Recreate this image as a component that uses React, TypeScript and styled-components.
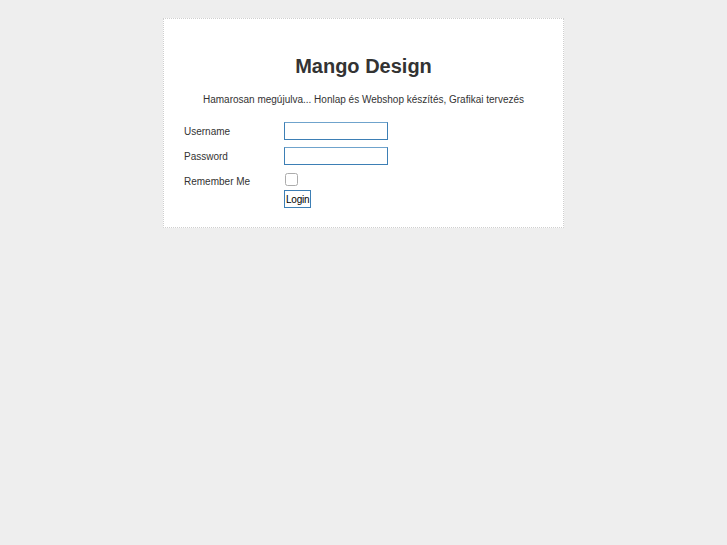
import styled, { createGlobalStyle } from 'styled-components';

const GlobalStyle = createGlobalStyle`
  html, body {
    margin: 0;
    padding: 0;
    background: #eeeeee;
    font-family: "Liberation Sans", Arial, sans-serif;
    color: #333333;
  }
`;

const App = () => (
  <>
    <GlobalStyle />
    <Page>
      <Card>
        <Title>Mango Design</Title>
        <Subtitle>Hamarosan megújulva... Honlap és Webshop készítés, Grafikai tervezés</Subtitle>
        <Form>
          <Label>Username</Label>
          <TextInput type="text" />
          <Label>Password</Label>
          <TextInput type="password" />
          <Label $top>Remember Me</Label>
          <Controls>
            <Check type="checkbox" />
            <LoginButton type="button">Login</LoginButton>
          </Controls>
        </Form>
      </Card>
    </Page>
  </>
);

const Page = styled.div`
  padding-top: 18px;
  height: 527px;
`;

const Card = styled.div`
  width: 399px;
  margin: 0 auto;
  background: #ffffff;
  border: 1px dotted #cfcfcf;
  padding: 35px 0 19px;
  box-sizing: content-box;
`;

const Title = styled.h1`
  margin: 0;
  font-size: 20px;
  font-weight: bold;
  text-align: center;
  color: #333333;
  line-height: 24px;
`;

const Subtitle = styled.p`
  margin: 15px 0 0;
  font-size: 10px;
  text-align: center;
  color: #333333;
  line-height: 13px;
`;

const Form = styled.div`
  display: grid;
  grid-template-columns: 100px 1fr;
  row-gap: 7px;
  align-items: center;
  padding: 0 20px;
  margin-top: 16px;
  font-size: 10px;
`;

const Label = styled.span<{ $top?: boolean }>`
  align-self: ${(p) => (p.$top ? 'start' : 'center')};
  padding-top: ${(p) => (p.$top ? '4px' : '0')};
  color: #333333;
`;

const TextInput = styled.input`
  width: 104px;
  height: 18px;
  box-sizing: border-box;
  border: 1px solid #3d7fb5;
  border-top-color: #6fa3cc;
  padding: 1px 3px;
  margin: 0;
  font-size: 10px;
  outline: none;
  background: #fff;
`;

const Controls = styled.div`
  display: flex;
  flex-direction: column;
  align-items: flex-start;
  gap: 4px;
  padding-top: 1px;
`;

const Check = styled.input`
  width: 13px;
  height: 13px;
  margin: 0 0 0 1px;
  opacity: 0.6;
`;

const LoginButton = styled.button`
  font-family: "Liberation Sans", Arial, sans-serif;
  font-size: 10px;
  height: 18px;
  padding: 0 1px;
  background: #ffffff;
  color: #000;
  border: 1px solid #3d7fb5;
  box-shadow: inset 0 0 0 1px #ffffff;
  letter-spacing: -0.2px;
`;

export default App;
